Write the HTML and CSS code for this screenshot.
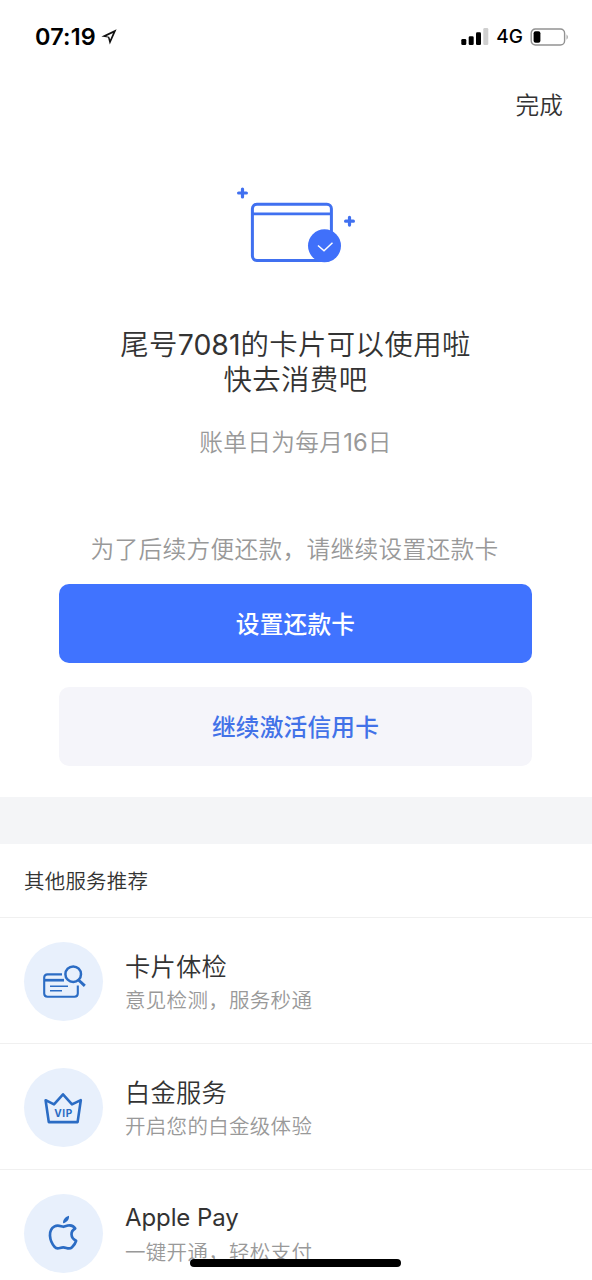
FILE: index.html
```html
<!DOCTYPE html>
<html lang="zh-CN">
<head>
<meta charset="utf-8">
<title>卡片激活</title>
<link rel="stylesheet" href="styles.css">
</head>
<body>
<div class="screen">
  <header class="status">
    <div class="status-left">
      <span class="clock">07:19</span>
      <svg class="location" width="17" height="18" viewBox="0 0 17 18"><path d="M15.6 1.2 0.4 8.6 7 9.6 8.8 16.4ZM12 5 5.2 8.3 8.2 8.8 9.2 11.6Z" fill="#111" fill-rule="evenodd"/></svg>
    </div>
    <div class="status-right">
      <svg width="28" height="18" viewBox="0 0 28 18"><rect x="0.3" y="11" width="5" height="6" rx="1.3"/><rect x="7.7" y="8.2" width="5" height="8.8" rx="1.3"/><rect x="15" y="4.3" width="5" height="12.7" rx="1.3"/><rect x="22.3" y="0" width="5" height="17" rx="1.3" fill="#cfcfcf"/></svg>
      <span class="network">4G</span>
      <svg width="40" height="20" viewBox="0 0 40 20"><rect x="1.2" y="2" width="33.4" height="16" rx="4.2" fill="none" stroke="#929292" stroke-width="1.4"/><rect x="3.6" y="4.2" width="6.8" height="11.6" rx="2"/><path d="M36.6 7.2Q38.8 10 36.6 12.8Z" fill="#888"/></svg>
    </div>
  </header>
  <nav class="nav"><span class="done">完成</span></nav>
  <main class="result">
    <svg class="hero" width="130" height="90" viewBox="0 0 130 90" fill="none" stroke="#4070f0">
      <path d="M12.5 9.1V16.9M8.6 13H16.4M119.5 37.3V45.1M115.6 41.2H123.4" stroke-width="3.2" stroke-linecap="round"/>
      <rect x="22.4" y="24.2" width="79" height="56.2" rx="4.5" stroke-width="3"/>
      <path d="M22.4 33.8H101.4" stroke-width="2.8"/>
      <circle cx="94.5" cy="65.8" r="16.5" fill="#4070fa" stroke="none"/>
      <path d="M88 65.5 94 70.8 102.5 62.8" stroke="#fff" stroke-width="1.5"/>
    </svg>
    <h1 class="title"><span class="line">尾号<span class="digits">7081</span>的卡片可以使用啦</span><span class="line">快去消费吧</span></h1>
    <p class="bill">账单日为每月<span class="digits">16</span>日</p>
    <p class="hint">为了后续方便还款，请继续设置还款卡</p>
    <button class="btn primary">设置还款卡</button>
    <button class="btn secondary">继续激活信用卡</button>
  </main>
  <section class="services">
    <h2 class="heading">其他服务推荐</h2>
    <div class="service">
      <div class="badge"><svg width="48" height="40" viewBox="0 0 48 40" fill="none" stroke="#2b6cc4" stroke-width="2.1"><path d="M23 12.4H8.5Q5.2 12.4 5.2 15.6V31.5Q5.2 34.7 8.5 34.7H35.5Q38.8 34.7 38.8 31.5V23.5"/><path d="M5.2 18.2H25" stroke-width="2.7"/><path d="M11 24.3H29M11 28.7H23" stroke-width="1.6"/><circle cx="34.2" cy="12.2" r="7.8" stroke-width="2.5"/><path d="M39.8 18.2 45.8 23.9" stroke-width="2.9"/></svg></div>
      <div class="copy"><div class="name">卡片体检</div><div class="desc">意见检测，服务秒通</div></div>
    </div>
    <div class="service">
      <div class="badge"><svg width="48" height="40" viewBox="0 0 48 40"><path d="M6.6 12.2 15 16.4 24 6.3 33 16.4 41.8 12.2 38.6 34.1H9.8Z" fill="none" stroke="#2b6cc4" stroke-width="2.6" stroke-linejoin="round"/><text class="vip" x="24.5" y="28.7" text-anchor="middle">VIP</text></svg></div>
      <div class="copy"><div class="name">白金服务</div><div class="desc">开启您的白金级体验</div></div>
    </div>
    <div class="service">
      <div class="badge"><svg width="48" height="40" viewBox="0 0 48 40"><path d="M24.4 12.8C20.8 12 18.8 10.6 15.6 12.4C8.5 16.2 10.4 26.6 15.6 32.9C18.4 36.2 20.6 33.3 24.2 33.3C27.5 33.3 30 36.3 33 33.2C35 31.3 36.4 29.4 37.1 26.8C31.1 23.7 31.2 17.2 36.2 14.5C34.5 11.5 31.3 11 28.8 11.5Z" fill="none" stroke="#2b6cc4" stroke-width="2.7" stroke-linejoin="round"/><path d="M24.1 9.3C23.7 5.3 26.5 2.8 30 1.8C30.4 5.8 27.7 8.6 24.1 9.3Z" fill="#2b6cc4"/></svg></div>
      <div class="copy"><div class="name latin">Apple Pay</div><div class="desc">一键开通，轻松支付</div></div>
    </div>
  </section>
  <div class="home-bar"></div>
</div>
</body>
</html>
```
FILE: styles.css
```css
* { box-sizing: border-box; margin: 0; padding: 0; }
body { background: #fff; overflow: hidden; font-family: "Noto Sans CJK SC", sans-serif; font-weight: 350; color: #333; }
.screen { position: relative; width: 592px; height: 1280px; overflow: hidden; }
.status { display: flex; justify-content: space-between; height: 73px; padding: 0 22px 0 35px; }
.status-left, .status-right { display: flex; align-items: center; color: #000; font-family: Inter, sans-serif; }
.status-left { gap: 5px; }
.clock { font-size: 23.4px; font-weight: 600; letter-spacing: 0.2px; }
.status-right { gap: 7px; }
.network { font-size: 19px; font-weight: 500; }
.nav { display: flex; justify-content: flex-end; height: 62px; padding-right: 29px; align-items: center; }
.done { font-size: 23.7px; }
.result { display: flex; flex-direction: column; align-items: center; height: 662px; padding: 45px 1px 0 0; }
.hero { margin-right: 2px; }
.title { margin-top: 55px; font-size: 28.4px; line-height: 35px; font-weight: 350; letter-spacing: 0.4px; text-align: center; }
.line { display: block; height: 35px; }
.digits { font-family: Inter, sans-serif; font-weight: 400; line-height: 1; letter-spacing: 0; }
.bill, .hint { color: #999; font-size: 23.7px; line-height: 35px; letter-spacing: 0.3px; }
.bill { margin-top: 29px; }
.hint { margin: 72px 2px 0 0; }
.btn { width: 473px; height: 79px; padding-bottom: 2px; border: 0; border-radius: 10px; font: 500 23.7px "Noto Sans CJK SC", sans-serif; letter-spacing: 0.2px; }
.primary { margin-top: 18px; background: #4073ff; color: #fff; }
.secondary { margin-top: 24px; background: #f5f5fa; color: #4272e8; }
.services { border-top: 47px solid #f4f5f7; }
.heading { height: 73px; padding-left: 24px; font-size: 20.5px; line-height: 73px; font-weight: 350; letter-spacing: 0.2px; }
.service { display: flex; gap: 22px; height: 126px; padding: 24px 24px 0; border-top: 1px solid #f0f0f0; }
.badge { display: flex; flex: none; align-items: center; justify-content: center; width: 79px; height: 79px; padding-right: 1px; border-radius: 50%; background: #e8f0fc; }
.vip { fill: #2b6cc4; font: 700 10px Inter, sans-serif; letter-spacing: 0.5px; }
.name { margin-top: 5px; font-size: 25.3px; line-height: 36px; letter-spacing: 0.2px; }
.latin { padding-top: 2px; font-family: Inter, sans-serif; font-size: 24px; font-weight: 400; line-height: 34px; letter-spacing: -0.1px; }
.desc { color: #999; font-size: 20.5px; line-height: 32px; letter-spacing: 0.3px; }
.home-bar { position: absolute; left: 190px; top: 1259px; width: 211px; height: 8px; border-radius: 4px; background: #000; }
```
